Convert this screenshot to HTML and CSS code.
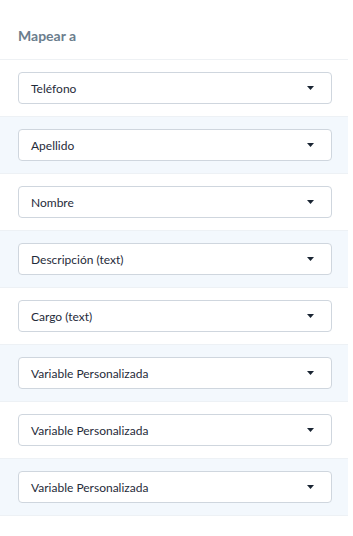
FILE: index.html
```html
<!DOCTYPE html>
<html lang="es">
<head>
    <meta charset="UTF-8">
    <meta name="viewport" content="width=device-width, initial-scale=1.0">
    <title>Mapear a</title>
    <link rel="stylesheet" href="styles.css">
</head>
<body>
    <div class="panel">
        <div class="panel-header">Mapear a</div>
        <div class="map-row">
            <div class="select-box"><span>Teléfono</span><svg class="caret" width="7" height="4" viewBox="0 0 7 4"><path d="M0 0h7L3.5 4z"/></svg></div>
        </div>
        <div class="map-row alt">
            <div class="select-box"><span>Apellido</span><svg class="caret" width="7" height="4" viewBox="0 0 7 4"><path d="M0 0h7L3.5 4z"/></svg></div>
        </div>
        <div class="map-row">
            <div class="select-box"><span>Nombre</span><svg class="caret" width="7" height="4" viewBox="0 0 7 4"><path d="M0 0h7L3.5 4z"/></svg></div>
        </div>
        <div class="map-row alt">
            <div class="select-box"><span>Descripción (text)</span><svg class="caret" width="7" height="4" viewBox="0 0 7 4"><path d="M0 0h7L3.5 4z"/></svg></div>
        </div>
        <div class="map-row">
            <div class="select-box"><span>Cargo (text)</span><svg class="caret" width="7" height="4" viewBox="0 0 7 4"><path d="M0 0h7L3.5 4z"/></svg></div>
        </div>
        <div class="map-row alt">
            <div class="select-box"><span>Variable Personalizada</span><svg class="caret" width="7" height="4" viewBox="0 0 7 4"><path d="M0 0h7L3.5 4z"/></svg></div>
        </div>
        <div class="map-row">
            <div class="select-box"><span>Variable Personalizada</span><svg class="caret" width="7" height="4" viewBox="0 0 7 4"><path d="M0 0h7L3.5 4z"/></svg></div>
        </div>
        <div class="map-row alt">
            <div class="select-box"><span>Variable Personalizada</span><svg class="caret" width="7" height="4" viewBox="0 0 7 4"><path d="M0 0h7L3.5 4z"/></svg></div>
        </div>
    </div>
</body>
</html>
```

FILE: styles.css
```css
body {
    margin: 0;
    font-family: Lato, "Open Sans", sans-serif;
    background-color: #ffffff;
    color: #1f2b3a;
}
.panel {
    width: 348px;
}
.panel-header {
    padding: 26px 18px 13px;
    line-height: 20px;
    font-size: 14px;
    font-weight: bold;
    color: #6b7d8d;
    border-bottom: 1px solid #eef1f4;
}
.map-row {
    padding: 12px 16px 12px 18px;
    border-bottom: 1px solid #edf1f5;
}
.map-row.alt {
    background-color: #f3f8fd;
}
.select-box {
    display: flex;
    justify-content: space-between;
    align-items: center;
    height: 32px;
    box-sizing: border-box;
    padding: 0 17px 0 12px;
    background: #ffffff;
    border: 1px solid #cfd6de;
    border-radius: 4px;
    font-size: 12px;
}
.caret {
    fill: #1a2533;
}
```
